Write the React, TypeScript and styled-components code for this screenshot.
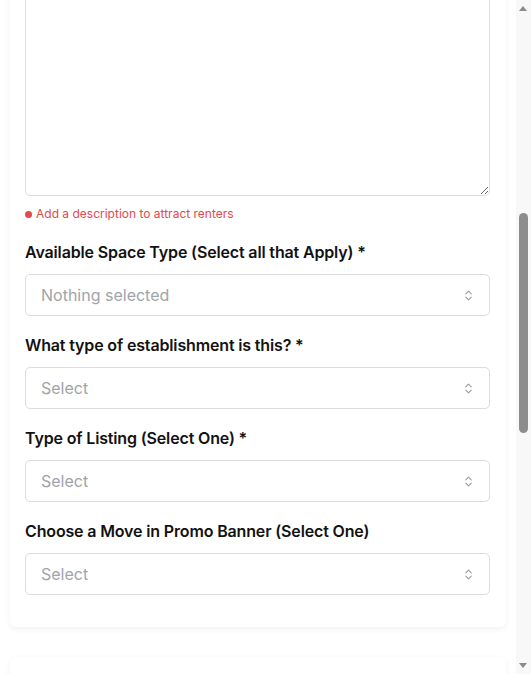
import React, { useLayoutEffect, useRef } from "react";
import styled, { createGlobalStyle } from "styled-components";
import { ChevronsUpDown } from "lucide-react";

const GlobalStyle = createGlobalStyle`
  html, body {
    margin: 0;
    padding: 0;
    background: #ffffff;
  }
  body {
    font-family: Inter, "Liberation Sans", sans-serif;
    color: #111111;
    padding-right: 15px;
  }
`;

/* fake window scrollbar (the headless browser hides the real one) */
const Rail = styled.div`
  position: fixed;
  top: 0;
  right: 0;
  bottom: 0;
  width: 15px;
  background: #f8f8f8;
  z-index: 10;
`;

const Arrow = styled.div<{ $down?: boolean }>`
  position: absolute;
  left: 3px;
  ${(p) => (p.$down ? "bottom: 6px;" : "top: 6px;")}
  width: 0;
  height: 0;
  border-left: 4.5px solid transparent;
  border-right: 4.5px solid transparent;
  ${(p) =>
    p.$down ? "border-top: 5px solid #8a8a8a;" : "border-bottom: 5px solid #8a8a8a;"}
`;

const Thumb = styled.div`
  position: absolute;
  left: 3px;
  width: 9px;
  border-radius: 5px;
  background: #8d8d8d;
`;

const Page = styled.div`
  padding: 10px 10px 24px;
  display: flex;
  flex-direction: column;
  gap: 30px;
`;

const Card = styled.section`
  background: #ffffff;
  border-radius: 6px;
  box-shadow: 0 2px 6px rgba(0, 0, 0, 0.06);
  padding: 20px 16px 32px 15px;
  display: flex;
  flex-direction: column;
`;

const Field = styled.div<{ $last?: boolean }>`
  display: flex;
  flex-direction: column;
  margin-bottom: ${(p) => (p.$last ? 0 : 19)}px;
`;

const Label = styled.label`
  font-size: 16px;
  font-weight: 600;
  letter-spacing: -0.15px;
  color: #121212;
  line-height: 20px;
  margin-bottom: 12px;
`;

const TextArea = styled.textarea`
  box-sizing: border-box;
  width: 100%;
  height: 260px;
  border: 1px solid #dcdcdc;
  border-radius: 5px;
  font-family: inherit;
  font-size: 16px;
  padding: 10px 15px;
  resize: vertical;
  outline: none;
`;

const Hint = styled.div<{ $error?: boolean }>`
  display: flex;
  align-items: center;
  gap: 4px;
  margin: 11px 0 2px;
  font-size: 12px;
  line-height: 14px;
  color: ${(p) => (p.$error ? "#e5484d" : "#888")};
  &::before {
    content: "";
    width: 7px;
    height: 7px;
    border-radius: 50%;
    background: currentColor;
    display: ${(p) => (p.$error ? "block" : "none")};
  }
`;

const SelectBox = styled.div`
  box-sizing: border-box;
  height: 42px;
  border: 1px solid #dcdcdc;
  border-radius: 5px;
  display: flex;
  align-items: center;
  justify-content: space-between;
  padding: 0 14px 0 15px;
  cursor: pointer;
`;

const Placeholder = styled.span`
  font-size: 16px;
  color: #a0a4a8;
`;

const Input = styled.input`
  box-sizing: border-box;
  height: 42px;
  border: 1px solid #dcdcdc;
  border-radius: 5px;
  font-family: inherit;
  font-size: 16px;
  padding: 0 15px;
  outline: none;
  &::placeholder {
    color: #a0a4a8;
  }
`;

const Spacer = styled.div<{ $h: number }>`
  height: ${(p) => p.$h}px;
`;

const Select = ({ text }: { text: string }) => (
  <SelectBox>
    <Placeholder>{text}</Placeholder>
    <ChevronsUpDown size={13} color="#9a9a9a" strokeWidth={2} />
  </SelectBox>
);

const App = () => {
  const areaRef = useRef<HTMLTextAreaElement>(null);

  useLayoutEffect(() => {
    const el = areaRef.current;
    if (!el) return;
    const bottom = el.getBoundingClientRect().bottom + window.scrollY;
    window.scrollTo(0, bottom - 196);
  }, []);

  return (
    <>
      <GlobalStyle />
      <Rail>
        <Arrow />
        <Thumb style={{ top: 213, height: 220 }} />
        <Arrow $down />
      </Rail>
      <Page>
        <Card>
          <Field>
            <Label>Listing Title *</Label>
            <Input placeholder="Enter a title" />
          </Field>
          <Field>
            <Label>Address *</Label>
            <Input placeholder="Street address" />
          </Field>
          <Spacer $h={120} />
          <Field>
            <Label>Description *</Label>
            <TextArea ref={areaRef} />
            <Hint $error>Add a description to attract renters</Hint>
          </Field>
          <Field>
            <Label>Available Space Type (Select all that Apply) *</Label>
            <Select text="Nothing selected" />
          </Field>
          <Field>
            <Label>What type of establishment is this? *</Label>
            <Select text="Select" />
          </Field>
          <Field>
            <Label>Type of Listing (Select One) *</Label>
            <Select text="Select" />
          </Field>
          <Field $last>
            <Label>Choose a Move in Promo Banner (Select One)</Label>
            <Select text="Select" />
          </Field>
        </Card>
        <Card>
          <Field $last>
            <Label>Photos</Label>
            <Spacer $h={560} />
          </Field>
        </Card>
      </Page>
    </>
  );
};

export default App;
